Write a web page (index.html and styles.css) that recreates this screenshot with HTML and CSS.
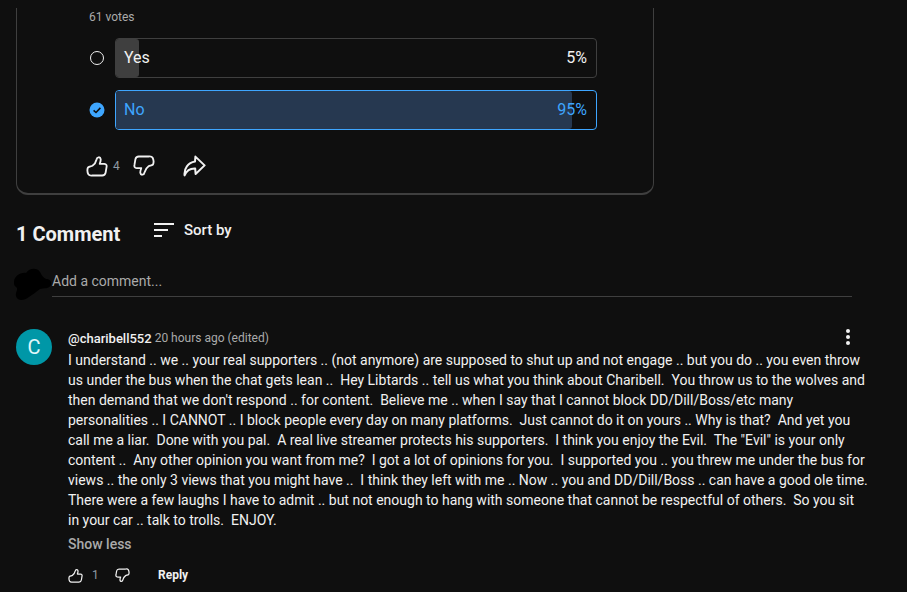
FILE: index.html
```html
<!DOCTYPE html>
<html lang="en">
<head>
<meta charset="utf-8">
<title>Poll and comments</title>
<link rel="stylesheet" href="styles.css">
</head>
<body>
<svg class="defs" width="0" height="0" aria-hidden="true">
  <symbol id="thumb" viewBox="0 0 24 24">
    <path d="M2.2 13.6C3.6 12.4 5.6 12.6 7 11.8C9.4 10.2 10.9 7.6 11.6 4.6C12 2.2 15.6 1.4 16 4.6C16.2 6.2 15.6 8 15 9.6L20 9.6C22.2 9.8 22.8 11.4 22.4 13.2L21.4 19.2C21 21.4 19.6 22.4 17.6 22.4L7 22.4C5.4 22.6 3.4 22.4 2.6 21C1.6 19 1.4 15.4 2.2 13.6Z" fill="none" stroke="currentColor" stroke-width="2" stroke-linejoin="round"/>
  </symbol>
  <symbol id="share" viewBox="0 0 24 24">
    <path d="M13.4 2.6L22.6 11.4L13.6 20L13.2 14.6C8.6 14.4 4.6 16.6 2.6 21.4C1.8 14.6 6 8.8 13 7.6Z" fill="none" stroke="currentColor" stroke-width="2" stroke-linejoin="round"/>
  </symbol>
</svg>

<section class="card">
  <p class="votes">61 votes</p>
  <div class="option">
    <span class="radio"></span>
    <div class="bar">
      <span class="fill fill-yes"></span>
      <span class="bar-label">Yes</span>
      <span class="bar-label">5%</span>
    </div>
  </div>
  <div class="option">
    <svg class="check" viewBox="0 0 16 16" aria-hidden="true">
      <circle cx="8" cy="8" r="7.5" fill="#3ea6ff"/>
      <path d="M4.6 8.3L7 10.5L11.4 5.9" fill="none" stroke="#0f0f0f" stroke-width="1.6"/>
    </svg>
    <div class="bar bar-chosen">
      <span class="fill fill-no"></span>
      <span class="bar-label">No</span>
      <span class="bar-label">95%</span>
    </div>
  </div>
  <div class="card-actions">
    <svg class="icon-lg"><use href="#thumb"/></svg>
    <span class="like-count">4</span>
    <svg class="icon-lg flip"><use href="#thumb"/></svg>
    <svg class="icon-share"><use href="#share"/></svg>
  </div>
</section>

<section class="comments">
  <header class="comments-head">
    <h2 class="comments-title">1 Comment</h2>
    <div class="sort">
      <svg class="sort-icon" viewBox="0 0 20 14" aria-hidden="true">
        <path d="M0 1H20M0 7H14M0 13H8" stroke="#f1f1f1" stroke-width="2" fill="none"/>
      </svg>
      <span class="sort-label">Sort by</span>
    </div>
  </header>

  <div class="add">
    <svg class="blob" viewBox="0 0 39 33" aria-hidden="true">
      <path d="M1 14C1 8 8 4 13 5C16 0 24 -1 27 4C29 8 30 9 33 11C37 11 39 14 38 17C36 21 31 20 27 21C23 24 19 27 16 29C11 33 4 33 3 28C2 24 6 21 3 19C1 18 1 16 1 14Z" fill="#000"/>
    </svg>
    <div class="add-input">Add a comment...</div>
  </div>

  <article class="comment">
    <div class="avatar">C</div>
    <div class="comment-body">
      <div class="comment-meta">
        <span class="author">@charibell552</span>
        <span class="time">20 hours ago (edited)</span>
        <span class="kebab"><i></i><i></i><i></i></span>
      </div>
      <p class="comment-text">I understand .. we .. your real supporters .. (not anymore) are supposed to shut up and not engage .. but you do .. you even throw
us under the bus when the chat gets lean ..  Hey Libtards .. tell us what you think about Charibell.  You throw us to the wolves and
then demand that we don't respond .. for content.  Believe me .. when I say that I cannot block DD/Dill/Boss/etc many
personalities .. I CANNOT .. I block people every day on many platforms.  Just cannot do it on yours .. Why is that?  And yet you
call me a liar.  Done with you pal.  A real live streamer protects his supporters.  I think you enjoy the Evil.  The "Evil" is your only
content ..  Any other opinion you want from me?  I got a lot of opinions for you.  I supported you .. you threw me under the bus for
views .. the only 3 views that you might have ..  I think they left with me .. Now .. you and DD/Dill/Boss .. can have a good ole time.
There were a few laughs I have to admit .. but not enough to hang with someone that cannot be respectful of others.  So you sit
in your car .. talk to trolls.  ENJOY.</p>
      <div class="show-less">Show less</div>
      <div class="comment-actions">
        <svg class="icon-sm"><use href="#thumb"/></svg>
        <span class="comment-likes">1</span>
        <svg class="icon-sm flip"><use href="#thumb"/></svg>
        <span class="reply">Reply</span>
      </div>
    </div>
  </article>
</section>
</body>
</html>
```

FILE: styles.css
```css
* { box-sizing: border-box; }

html, body {
  margin: 0;
  height: 100%;
  overflow: hidden;
}

body {
  background: #0f0f0f;
  color: #f1f1f1;
  font-family: Roboto, "Liberation Sans", sans-serif;
  padding-top: 8px;
}

.defs { position: absolute; }

.card {
  width: 638px;
  height: 187px;
  margin-left: 16px;
  padding: 3px 0 0 71px;
  border: 1px solid #3f3f3f;
  border-top: 0;
  border-bottom-width: 2px;
  border-radius: 0 0 12px 12px;
}

.votes {
  margin: 0 0 0 1px;
  height: 12px;
  font-size: 12px;
  line-height: 12px;
  color: #aaa;
}

.option {
  display: flex;
  align-items: center;
  gap: 10px;
  height: 40px;
  margin-top: 12px;
}

.votes + .option { margin-top: 15px; }

.radio {
  width: 14px;
  height: 14px;
  margin-left: 2px;
  margin-right: 1px;
  border: 1.5px solid #f1f1f1;
  border-radius: 50%;
}

.check {
  width: 16px;
  height: 16px;
  margin-left: 1px;
}

.bar {
  position: relative;
  display: flex;
  align-items: center;
  justify-content: space-between;
  width: 482px;
  height: 40px;
  padding: 0 9px 2px 8px;
  border: 1px solid #3f3f3f;
  border-radius: 4px;
  font-size: 16px;
  color: #f1f1f1;
}

.bar-chosen {
  border-color: #3ea6ff;
  color: #3ea6ff;
}

.fill {
  position: absolute;
  left: 0;
  top: 0;
  bottom: 0;
  border-radius: 3px;
}

.fill-yes { width: 23px; background: #3f3f3f; }
.fill-no { width: 456px; background: #263850; }

.bar-label { position: relative; }

.card-actions {
  display: flex;
  align-items: center;
  height: 24px;
  margin-top: 24px;
  margin-left: -2px;
}

.icon-lg {
  width: 22px;
  height: 22px;
  color: #f1f1f1;
}

.icon-share {
  width: 24px;
  height: 24px;
  margin-left: 27px;
  color: #f1f1f1;
}

.like-count {
  margin-left: 5px;
  width: 20px;
  font-size: 12px;
  color: #8f9aa3;
}

.flip { transform: scale(-1, -1); }

.comments { padding-left: 16px; }

.comments-head {
  display: flex;
  align-items: flex-start;
  height: 60px;
  padding-top: 27px;
}

.comments-title {
  margin: 0;
  width: 138px;
  font-size: 20px;
  line-height: 24px;
  font-weight: 700;
}

.sort {
  display: flex;
  align-items: center;
  gap: 10px;
  margin-top: -2px;
}

.sort-icon { width: 20px; height: 14px; }

.sort-label {
  font-size: 15px;
  line-height: 20px;
  font-weight: 500;
}

.add {
  display: flex;
  align-items: flex-start;
  height: 74px;
  margin-left: -3px;
  padding-top: 13px;
}

.blob { width: 39px; height: 33px; flex: none; }

.add-input {
  width: 800px;
  height: 26px;
  margin-top: 3px;
  border-bottom: 1px solid #3f3f3f;
  font-size: 14px;
  line-height: 20px;
  color: #aaa;
}

.comment {
  display: flex;
  gap: 16px;
}

.avatar {
  display: flex;
  align-items: center;
  justify-content: center;
  flex: none;
  width: 36px;
  height: 36px;
  border-radius: 50%;
  background: #0097a7;
  font-size: 20px;
  color: #e0f7fa;
}

.comment-meta {
  display: flex;
  align-items: center;
  gap: 3px;
  height: 18px;
  font-size: 12px;
  width: 783px;
}

.author { font-size: 13px; font-weight: 500; }
.time { color: #aaa; }

.kebab {
  display: flex;
  flex-direction: column;
  gap: 2px;
  margin-left: auto;
  margin-right: 1px;
  margin-top: -2px;
}

.kebab i {
  display: block;
  width: 4px;
  height: 4px;
  border-radius: 50%;
  background: #f1f1f1;
}

.comment-text {
  margin: 3px 0 0;
  font-size: 14px;
  line-height: 20px;
  white-space: pre;
}

.show-less {
  margin-top: 4px;
  font-size: 14px;
  line-height: 20px;
  font-weight: 500;
  color: #aaa;
}

.comment-actions {
  display: flex;
  align-items: center;
  height: 16px;
  margin-top: 13px;
}

.icon-sm {
  width: 15px;
  height: 15px;
  color: #f1f1f1;
}

.comment-likes {
  width: 32px;
  padding-left: 9px;
  font-size: 12px;
  color: #8f9aa3;
}

.reply {
  margin-left: 28px;
  font-size: 12px;
  font-weight: 700;
}
```
